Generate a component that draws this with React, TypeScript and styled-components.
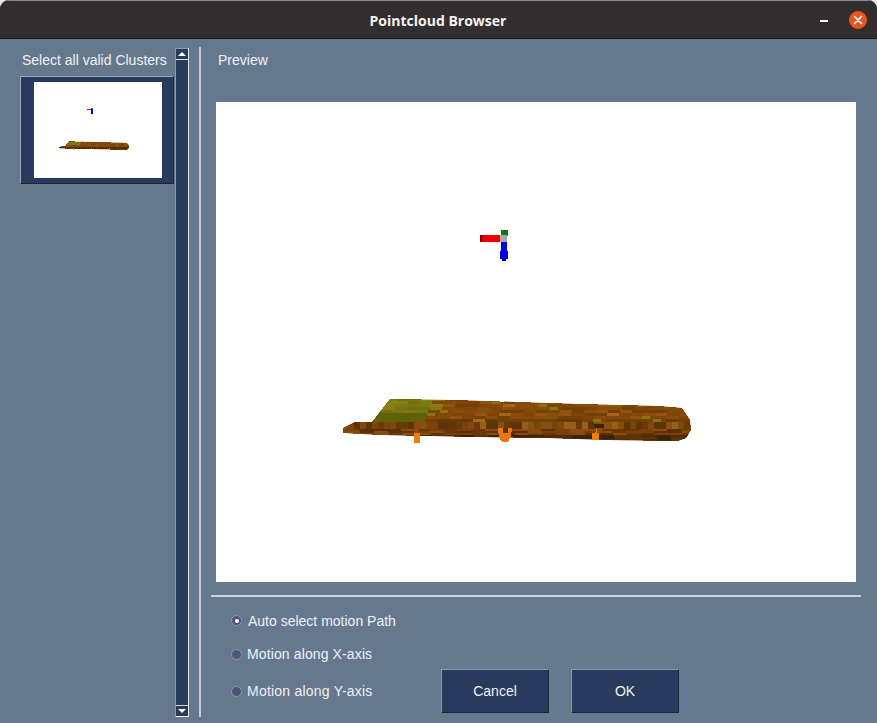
import React from "react";
import styled, { createGlobalStyle } from "styled-components";

const GlobalStyle = createGlobalStyle`
  html, body {
    margin: 0;
    padding: 0;
    background: #e8e8e8;
  }
  body {
    font-family: "Liberation Sans", Arial, sans-serif;
  }
`;

const Window = styled.div`
  width: 877px;
  height: 723px;
  display: flex;
  flex-direction: column;
  overflow: hidden;
  border-radius: 9px 9px 0 0;
  background: #66788e;
`;

const TitleBar = styled.header`
  height: 37px;
  display: grid;
  grid-template-columns: 1fr auto 1fr;
  align-items: center;
  background: #302e2e;
  border-top: 1px solid #8b8a88;
  border-bottom: 1px solid #1b1a1a;
`;

const Title = styled.h1`
  grid-column: 2;
  margin: 2px 1px 0 0;
  color: #f4f2f0;
  font: 700 14px "Open Sans", "Noto Sans", sans-serif;
`;

const Controls = styled.div`
  grid-column: 3;
  justify-self: end;
  display: flex;
  align-items: center;
  gap: 21px;
  padding-right: 10px;
`;

const MinimizeBar = styled.span`
  width: 8px;
  height: 2px;
  margin-top: 3px;
  background: #f2f2f2;
`;

const CloseButton = styled.span`
  width: 18px;
  height: 18px;
  border-radius: 50%;
  display: flex;
  align-items: center;
  justify-content: center;
  background: #e95420;
`;

const Body = styled.main`
  flex: 1;
  display: flex;
  padding: 9px 0 6px;
  min-height: 0;
`;

const LeftPane = styled.section`
  width: 155px;
  margin-left: 20px;
`;

const PaneLabel = styled.div<{ $indent: number }>`
  height: 24px;
  line-height: 24px;
  margin-left: ${(p) => p.$indent}px;
  color: #eef1f5;
  font-size: 14px;
  white-space: nowrap;
`;

const ClusterCard = styled.div`
  width: 154px;
  height: 108px;
  margin-top: 4px;
  box-sizing: border-box;
  padding: 5px 0 0 13px;
  background: #293b5c;
  border-style: solid;
  border-width: 1px;
  border-color: #98a6b8 #1b2438 #1b2438 #98a6b8;
`;

const Thumbnail = styled.div`
  width: 128px;
  height: 96px;
  background: #fff;
`;

const ScrollBar = styled.div`
  width: 14px;
  display: flex;
  flex-direction: column;
  background: #293b5c;
  border-left: 1px solid #8f9cae;
  border-right: 1px solid #e2e6ea;
  box-sizing: border-box;
`;

const ScrollTrack = styled.div`
  flex: 1;
`;

const ScrollArrow = styled.div<{ $down?: boolean }>`
  height: 10px;
  display: flex;
  align-items: center;
  justify-content: center;
  background: #293b5c;
  border-top: 1px solid ${(p) => (p.$down ? "#c8d0da" : "#8f9cae")};
  border-bottom: 1px solid ${(p) => (p.$down ? "#f0f2f4" : "#d5dbe2")};

  &::after {
    content: "";
    width: 0;
    height: 0;
    border-left: 4px solid transparent;
    border-right: 4px solid transparent;
    ${(p) =>
      p.$down
        ? "border-top: 4px solid #fff;"
        : "border-bottom: 4px solid #fff;"}
  }
`;

const Divider = styled.div`
  width: 2px;
  margin-left: 10px;
  margin-top: -1px;
  background: #c6cacf;
`;

const RightPane = styled.section`
  width: 650px;
  margin-left: 10px;
  display: flex;
  flex-direction: column;
`;

const Preview = styled.div`
  width: 640px;
  height: 480px;
  margin: 30px 0 13px 5px;
  background: #fff;
`;

const Rule = styled.hr`
  width: 650px;
  height: 2px;
  margin: 0;
  border: 0;
  background: #cdd1d5;
`;

const Footer = styled.div`
  flex: 1;
  display: flex;
  padding-left: 20px;
`;

const RadioGroup = styled.div`
  width: 210px;
  display: grid;
  grid-template-rows: 33px 34px 40px;
  padding-top: 7px;
  align-content: start;
`;

const RadioRow = styled.label<{ $gap: number; $spacing?: number }>`
  display: flex;
  align-items: center;
  gap: ${(p) => p.$gap}px;
  color: #eef1f5;
  font-size: 14px;
  letter-spacing: ${(p) => p.$spacing ?? 0}px;
  white-space: nowrap;
`;

const RadioDot = styled.span<{ $checked?: boolean }>`
  width: 11px;
  height: 11px;
  border-radius: 50%;
  box-sizing: border-box;
  display: flex;
  align-items: center;
  justify-content: center;
  background: #4f5478;
  border: 1px solid #8d97ab;

  &::after {
    content: "";
    width: 4px;
    height: 4px;
    border-radius: 50%;
    background: ${(p) => (p.$checked ? "#fff" : "transparent")};
  }
`;

const ButtonRow = styled.div`
  display: flex;
  gap: 22px;
  padding-top: 72px;
`;

const Button = styled.button`
  width: 108px;
  height: 44px;
  padding: 0;
  background: #293b5c;
  color: #eef1f5;
  font: 14px "Liberation Sans", Arial, sans-serif;
  border-style: solid;
  border-width: 1px;
  border-color: #8a99ae #1b2438 #1b2438 #8a99ae;
`;

// small seeded generator so the point cloud texture stays the same on each load
const rand = (a: number, b: number) => {
  const v = Math.sin(a * 12.9898 + b * 78.233) * 43758.5453;
  return v - Math.floor(v);
};

const pick = (list: string[], r: number) => list[Math.floor(r * list.length)];

const brown = ["#8a4c0a", "#7e4408", "#925210", "#84480a", "#74400a"];
const olive = ["#7d7a10", "#86800f", "#72700e", "#7a7412"];
const band = ["#7a4408", "#8a5010", "#6a3a08", "#96601a", "#7e4a0c", "#84500e", "#5e3408"];

type Cell = { x: number; y: number; w: number; h: number; fill: string };

const buildCells = () => {
  const cells: Cell[] = [];
  // top face of the log, long streaks shifted a bit per row
  for (let y = 398; y < 422; y += 3) {
    for (let x = 358 + ((y * 7) % 11); x < 696; x += 12) {
      const r = rand(x, y);
      const edge = 428 + (y - 398) * -1.2 + rand(y, x) * 16;
      let fill = pick(brown, r);
      if (y > 416) fill = r > 0.5 ? "#74400a" : "#683806";
      if (x < edge) {
        fill = y > 412 ? "#5f6008" : pick(olive, r);
      } else if (rand(x + 3, y + 7) > 0.88) {
        fill = rand(x, y + 1) > 0.35 ? "#85740f" : "#a8641a";
      }
      cells.push({ x, y, w: fill === "#85740f" ? 8 : 12, h: 3, fill });
    }
  }
  // front strip with its vertical bands
  for (let x = 342; x < 696; x += 6) {
    cells.push({ x, y: 422, w: 6, h: 7, fill: pick(band, rand(x, 2)) });
  }
  // lower streaks, darker to the bottom
  for (let y = 429; y < 442; y += 2) {
    for (let x = 342 + ((y * 5) % 9); x < 696; x += 14) {
      const r = rand(x, y);
      const fill =
        y > 434
          ? pick(["#4e2a06", "#5c3206", "#3e2204"], r)
          : pick(["#7a4008", "#6a3606", "#8a4c0c", "#5c3006"], r);
      cells.push({ x, y, w: 14, h: 2, fill });
    }
  }
  return cells;
};

// one cell per screen pixel, for the small picture
const buildThumbCells = () => {
  const cells: Cell[] = [];
  for (let y = 397; y < 442; y += 5) {
    for (let x = 341; x < 696; x += 5) {
      const r = rand(x, y);
      let fill = y > 426 ? pick(["#5c3206", "#4e2a06"], r) : pick(brown, r);
      if (y < 417 && x < 445) fill = pick(olive, r);
      cells.push({ x, y, w: 5, h: 5, fill });
    }
  }
  return cells;
};

const logCells = buildCells();
const thumbCells = buildThumbCells();

const logOutline =
  "343,428 355,422 372,422 390,399 452,400 515,402 578,404 658,406 682,408 690,420 691,430 686,438 678,441 608,440 548,438 478,437 382,435 343,433";

const PointCloud: React.FC<{ clipId: string; small?: boolean }> = ({ clipId, small }) => {
  const cells = small ? thumbCells : logCells;
  return (
    <svg width="100%" height="100%" viewBox="216 102 640 480" shapeRendering="crispEdges" style={{ display: "block" }}>
      <clipPath id={clipId}>
        <polygon points={logOutline} />
      </clipPath>
      <polygon points={logOutline} fill="#7e4408" />
      <g clipPath={`url(#${clipId})`}>
        {cells.map((c, i) => (
          <rect key={i} x={c.x} y={c.y} width={c.w} height={c.h} fill={c.fill} />
        ))}
      </g>
      {small ? (
        <>
          <rect x="411" y="432" width="5" height="10" fill="#ee7d10" />
          <rect x="501" y="432" width="5" height="5" fill="#ee7d10" />
          <rect x="591" y="432" width="5" height="5" fill="#ee7d10" />
          {/* axes marker, one pixel thick at this size */}
          <rect x="481" y="237" width="20" height="5" fill="#d80000" />
          <rect x="501" y="232" width="10" height="5" fill="#0a7a12" />
          <rect x="501" y="237" width="10" height="25" fill="#0000e0" />
        </>
      ) : (
        <>
          {/* legs under the log */}
          <rect x="414" y="423" width="5" height="10" fill="#8a4a10" />
          <rect x="414" y="433" width="6" height="10" fill="#ee7d10" />
          <path d="M498 428h5l2 6 3-6h4l-1 9-3 5h-6l-3-5z" fill="#e8780e" />
          <rect x="503" y="428" width="5" height="5" fill="#5e3206" />
          <rect x="594" y="424" width="10" height="4" fill="#3e2204" />
          <path d="M597 428h5l-3 6v6h-7v-7h3z" fill="#ee7d10" />
          <rect x="597" y="428" width="5" height="5" fill="#8a4a10" />
          {/* axes marker */}
          <rect x="480" y="235" width="2" height="7" fill="#6d0000" />
          <rect x="482" y="235" width="18" height="7" fill="#ee0000" />
          <rect x="501" y="230" width="7" height="6" fill="#0a7a12" />
          <rect x="500" y="235" width="7" height="7" fill="#a9a9a9" />
          <rect x="501" y="242" width="6" height="10" fill="#0000e0" />
          <rect x="500" y="251" width="8" height="8" fill="#0000e0" />
          <rect x="502" y="259" width="4" height="2" fill="#00008a" />
        </>
      )}
    </svg>
  );
};

export default function App() {
  return (
    <>
      <GlobalStyle />
      <Window>
        <TitleBar>
          <Title>Pointcloud Browser</Title>
          <Controls>
            <MinimizeBar />
            <CloseButton>
              <svg width="10" height="10" viewBox="0 0 10 10">
                <path d="M1.5 1.5l7 7M8.5 1.5l-7 7" stroke="#fff" strokeWidth="1.6" strokeLinecap="round" />
              </svg>
            </CloseButton>
          </Controls>
        </TitleBar>
        <Body>
          <LeftPane>
            <PaneLabel $indent={2}>Select all valid Clusters</PaneLabel>
            <ClusterCard>
              <Thumbnail>
                <PointCloud clipId="thumb-clip" small />
              </Thumbnail>
            </ClusterCard>
          </LeftPane>
          <ScrollBar>
            <ScrollArrow />
            <ScrollTrack />
            <ScrollArrow $down />
          </ScrollBar>
          <Divider />
          <RightPane>
            <PaneLabel $indent={7}>Preview</PaneLabel>
            <Preview>
              <PointCloud clipId="preview-clip" />
            </Preview>
            <Rule />
            <Footer>
              <RadioGroup>
                <RadioRow $gap={6}>
                  <RadioDot $checked />
                  Auto select motion Path
                </RadioRow>
                <RadioRow $gap={5} $spacing={0.12}>
                  <RadioDot />
                  Motion along X-axis
                </RadioRow>
                <RadioRow $gap={5} $spacing={0.22}>
                  <RadioDot />
                  Motion along Y-axis
                </RadioRow>
              </RadioGroup>
              <ButtonRow>
                <Button>Cancel</Button>
                <Button>OK</Button>
              </ButtonRow>
            </Footer>
          </RightPane>
        </Body>
      </Window>
    </>
  );
}
